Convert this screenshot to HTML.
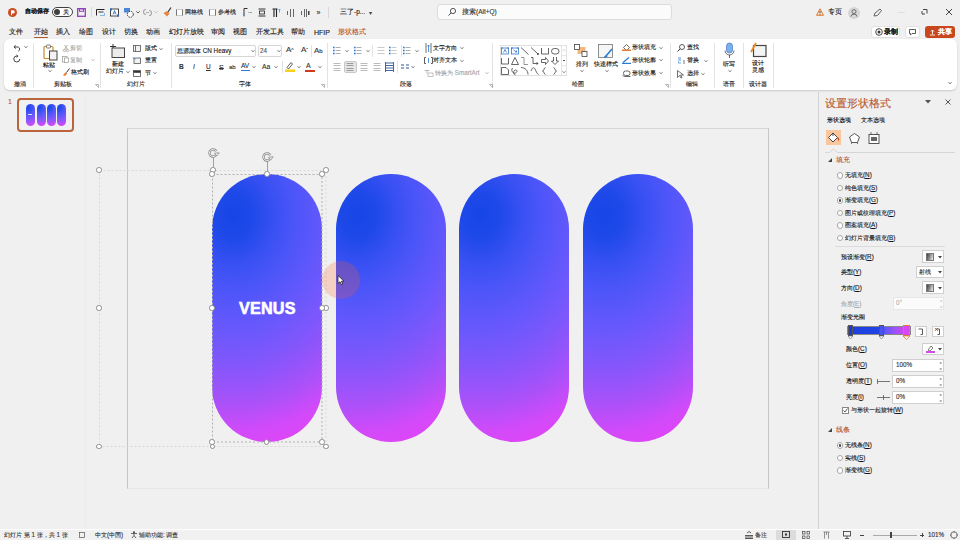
<!DOCTYPE html>
<html><head><meta charset="utf-8"><style>*{box-sizing:border-box}
html,body{margin:0;padding:0;width:960px;height:540px;overflow:hidden;background:#f0f0f0;font-family:"Liberation Sans",sans-serif;color:#262626}
.a{position:absolute}
.t{position:absolute;white-space:nowrap;-webkit-text-stroke:0.12px currentColor}
.cap{position:absolute;top:174px;width:110px;height:268px;border-radius:55px;
background:radial-gradient(ellipse 220px 264px at 21px 41px,#1646e5 0.00%,#1f49e9 9.09%,#3750f2 18.18%,#4a55f8 27.27%,#5b57fb 36.36%,#6c58fc 45.45%,#7e57fc 54.55%,#9454fa 63.64%,#af50f9 72.73%,#d14af9 81.82%,#e245f7 90.91%,#e843f6 100.00%)}
.hd{position:absolute;width:7px;height:7px;border-radius:50%;background:#fff;border:1px solid #8c8c8c}
svg{overflow:visible}
u{text-decoration-thickness:0.5px;text-underline-offset:0.6px}
</style></head><body>
<div class="a" style="left:0px;top:0px;width:960px;height:540px;background:#f0f0f0"></div>
<div class="a" style="left:4px;top:39px;width:953px;height:51px;background:#fff;border-radius:6px;box-shadow:0 1px 2px rgba(0,0,0,.16)"></div>
<div class="a" style="left:85px;top:92px;width:1px;height:437px;background:#ececec"></div>
<div class="a" style="left:127px;top:128px;width:642px;height:361px;border:1px solid #c6c6c6;border-top-color:#d6d6d6;border-bottom-color:#e6e6e6;background:#f0f0f0"></div>
<div class="t" style="left:8px;top:98.00px;font-size:7px;height:7px;line-height:7px;color:#b5562a;font-weight:normal;">1</div>
<div class="a" style="left:17px;top:98px;width:57px;height:34px;border:2px solid #b9643a;border-radius:4px;background:#f1f1f1"></div>
<div class="a" style="left:26px;top:104px;width:9px;height:22px;border-radius:4.5px;background:radial-gradient(ellipse 18px 21px at 2px 3.4px,#1b46e7 0%,#354ff1 18%,#5757fa 36%,#7a58fc 55%,#a752fa 73%,#de46f7 91%,#e843f6 100%)"></div>
<div class="a" style="left:36.5px;top:104px;width:9px;height:22px;border-radius:4.5px;background:radial-gradient(ellipse 18px 21px at 2px 3.4px,#1b46e7 0%,#354ff1 18%,#5757fa 36%,#7a58fc 55%,#a752fa 73%,#de46f7 91%,#e843f6 100%)"></div>
<div class="a" style="left:47px;top:104px;width:9px;height:22px;border-radius:4.5px;background:radial-gradient(ellipse 18px 21px at 2px 3.4px,#1b46e7 0%,#354ff1 18%,#5757fa 36%,#7a58fc 55%,#a752fa 73%,#de46f7 91%,#e843f6 100%)"></div>
<div class="a" style="left:57px;top:104px;width:9px;height:22px;border-radius:4.5px;background:radial-gradient(ellipse 18px 21px at 2px 3.4px,#1b46e7 0%,#354ff1 18%,#5757fa 36%,#7a58fc 55%,#a752fa 73%,#de46f7 91%,#e843f6 100%)"></div>
<div class="a" style="left:28px;top:114px;width:4px;height:1px;background:#ddd"></div>
<svg class="a" style="left:8px;top:8px;" width="9" height="9" viewBox="0 0 9 9"><circle cx="4.5" cy="4.5" r="4.5" fill="#c94d25"/><path d="M3 2.2h2.2a1.6 1.6 0 0 1 0 3.2H4v1.8H3z" fill="#fff"/></svg>
<div class="t" style="left:25px;top:9.05px;font-size:5.9px;height:5.9px;line-height:5.9px;color:#1a1a1a;font-weight:bold;">自动保存</div>
<div class="a" style="left:52px;top:7px;width:21px;height:10px;border:1px solid #404040;border-radius:5px;background:#fff"></div>
<div class="a" style="left:54px;top:9px;width:6px;height:6px;border-radius:50%;background:#404040"></div>
<div class="t" style="left:63px;top:9.00px;font-size:6px;height:6px;line-height:6px;color:#161616;font-weight:normal;">关</div>
<svg class="a" style="left:77px;top:8px;" width="9" height="9" viewBox="0 0 9 9"><rect x="0.7" y="0.7" width="7.6" height="7.6" fill="none" stroke="#8f3fb8" stroke-width="1.3"/><rect x="2.5" y="0.7" width="4" height="2.6" fill="none" stroke="#8f3fb8" stroke-width="1"/></svg>
<div class="a" style="left:91px;top:7px;width:1px;height:10px;background:#d8d8d8"></div>
<svg class="a" style="left:96px;top:9px;" width="9" height="8" viewBox="0 0 9 8"><path d="M.5 6.5V.5H8.5" fill="none" stroke="#222" stroke-width="1"/><path d="M2.5 3h5" stroke="#222" stroke-width=".9"/><path d="M4 6.5h4.5V4" fill="none" stroke="#7fb2e5" stroke-width="1"/></svg>
<svg class="a" style="left:110px;top:8px;" width="9" height="9" viewBox="0 0 9 9"><rect x=".5" y="1" width="8" height="7" fill="#fff" stroke="#333" stroke-width=".9"/><rect x="0" y=".5" width="2" height="2" fill="#2b6cc4"/><rect x="7" y="6.5" width="2" height="2" fill="#2b6cc4"/><path d="M3 6.5l1.5-4 1.5 4M3.6 5h1.8" fill="none" stroke="#2b6cc4" stroke-width=".8"/></svg>
<svg class="a" style="left:124px;top:8px;" width="10" height="10" viewBox="0 0 10 10"><rect x="0" y="0" width="6" height="4.5" fill="#4a86d8"/><circle cx="6.3" cy="6.3" r="3" fill="#fff" stroke="#333" stroke-width="1" stroke-dasharray="1.6 .8"/></svg>
<svg class="a" style="left:136px;top:11px;" width="4" height="3" viewBox="0 0 4 3"><path d="M.3.3L2 2 3.7.3" fill="none" stroke="#333" stroke-width=".8"/></svg>
<svg class="a" style="left:143px;top:8px;" width="9" height="9" viewBox="0 0 9 9"><path d="M3 1.5a2.5 2.5 0 1 0 0 5M6 2.5a2.5 2.5 0 1 1 0 5" fill="none" stroke="#aaa" stroke-width="1.2"/><path d="M3 4.5l3 0" stroke="#aaa" stroke-width="1"/></svg>
<svg class="a" style="left:154px;top:11px;" width="4" height="3" viewBox="0 0 4 3"><path d="M.3.3L2 2 3.7.3" fill="none" stroke="#bbb" stroke-width=".8"/></svg>
<svg class="a" style="left:163px;top:7px;" width="9" height="10" viewBox="0 0 9 10"><path d="M.5 6l3.5-2 2.5 2.5-2.5 3z" fill="#e9823e"/><path d="M5 5l3-4.5" stroke="#333" stroke-width="1.2"/></svg>
<div class="a" style="left:176px;top:9px;width:7px;height:7px;border:1px solid #777;border-top-color:#ccc;border-bottom-color:#ccc;background:#fff"></div>
<div class="t" style="left:185px;top:9.00px;font-size:6px;height:6px;line-height:6px;color:#161616;font-weight:normal;">网格线</div>
<div class="a" style="left:209px;top:9px;width:7px;height:7px;border:1px solid #777;border-top-color:#ccc;border-bottom-color:#ccc;background:#fff"></div>
<div class="t" style="left:218px;top:9.00px;font-size:6px;height:6px;line-height:6px;color:#161616;font-weight:normal;">参考线</div>
<svg class="a" style="left:243px;top:8px;" width="9" height="9" viewBox="0 0 9 9"><path d="M4.5.5H1V8" fill="none" stroke="#333" stroke-width="1"/><path d="M1 6v2.5" stroke="#4a90d9" stroke-width="1.2" stroke-dasharray="1 .6"/><path d="M5 4.5h2" stroke="#aaa" stroke-width=".8"/><circle cx="8" cy="4.5" r=".6" fill="#333"/></svg>
<svg class="a" style="left:258px;top:8px;" width="8" height="9" viewBox="0 0 8 9"><path d="M.5 1h7M.5 8h7" stroke="#333" stroke-width="1"/><rect x="1.5" y="3" width="5" height="3" fill="none" stroke="#333" stroke-width=".9"/><path d="M4 8.2v.8" stroke="#4a90d9" stroke-width=".8"/></svg>
<svg class="a" style="left:272px;top:8px;" width="9" height="9" viewBox="0 0 9 9"><path d="M.5 1h5M2 1v8M4.5 1v8" stroke="#222" stroke-width="1.1"/><path d="M6.5 1.5h2M7.5 1.5v3" stroke="#4a90d9" stroke-width=".8"/></svg>
<svg class="a" style="left:287px;top:9px;" width="7" height="8" viewBox="0 0 7 8"><path d="M.5 2v4M3.5 0v8M6.5 0v8" stroke="#444" stroke-width=".8"/></svg>
<svg class="a" style="left:301px;top:9px;" width="9" height="8" viewBox="0 0 9 8"><path d="M.5 2v4M3.5 0v8M5.5 0v8" stroke="#444" stroke-width=".8"/><rect x="7" y="2" width="1.5" height="4" fill="#444"/></svg>
<div class="t" style="left:316.5px;top:9.00px;font-size:7px;height:7px;line-height:7px;color:#333;font-weight:normal;">»</div>
<div class="a" style="left:328px;top:7px;width:1px;height:11px;background:#d8d8d8"></div>
<div class="t" style="left:340px;top:8.75px;font-size:6.5px;height:6.5px;line-height:6.5px;color:#161616;font-weight:normal;">三了-p...</div>
<div class="t" style="left:369px;top:9.50px;font-size:6px;height:6px;line-height:6px;color:#444;font-weight:normal;">▾</div>
<div class="a" style="left:437px;top:4px;width:235px;height:16px;background:#fbfbfb;border:1px solid #dcdcdc;border-radius:3px"></div>
<svg class="a" style="left:448px;top:8px;" width="8" height="8" viewBox="0 0 8 8"><circle cx="5" cy="3" r="2.6" fill="none" stroke="#444" stroke-width="0.9"/><path d="M3.1 4.9L0.5 7.5" stroke="#444" stroke-width="1"/></svg>
<div class="t" style="left:462px;top:8.75px;font-size:6.5px;height:6.5px;line-height:6.5px;color:#333;font-weight:normal;">搜索(Alt+Q)</div>
<svg class="a" style="left:816px;top:8px;" width="8" height="8" viewBox="0 0 8 8"><path d="M4 0.8L7.5 7.3H0.5z" fill="#fbe3cf" stroke="#e07b30" stroke-width="1"/><path d="M4 3v2.2M4 5.9v.8" stroke="#333" stroke-width=".9"/></svg>
<div class="t" style="left:828px;top:8.75px;font-size:6.5px;height:6.5px;line-height:6.5px;color:#161616;font-weight:normal;">专页</div>
<svg class="a" style="left:848px;top:7px;" width="12" height="12" viewBox="0 0 12 12"><circle cx="6" cy="6" r="6" fill="#d6d6d6"/><circle cx="6" cy="4.6" r="2" fill="none" stroke="#555" stroke-width=".8"/><path d="M2.8 9.6a3.3 3.3 0 0 1 6.4 0" fill="none" stroke="#555" stroke-width=".8"/></svg>
<svg class="a" style="left:873px;top:8px;" width="9" height="9" viewBox="0 0 9 9"><path d="M1 8l1-3 5-4 1.5 1.5-4 5z" fill="none" stroke="#555" stroke-width=".9"/></svg>
<div class="a" style="left:898px;top:12px;width:7px;height:1px;background:#e0e0e0"></div>
<svg class="a" style="left:921px;top:8px;" width="7" height="7" viewBox="0 0 7 7"><path d="M2 1.5h4v4M1 3v3h3" fill="none" stroke="#444" stroke-width="1"/></svg>
<svg class="a" style="left:945px;top:8px;" width="8" height="8" viewBox="0 0 8 8"><path d="M1 1l6 6M7 1l-6 6" stroke="#444" stroke-width="1"/></svg>
<div class="t" style="left:9px;top:28.60px;font-size:6.8px;height:6.8px;line-height:6.8px;color:#161616;font-weight:normal;">文件</div>
<div class="t" style="left:34px;top:28.60px;font-size:6.8px;height:6.8px;line-height:6.8px;color:#161616;font-weight:normal;">开始</div>
<div class="t" style="left:56px;top:28.60px;font-size:6.8px;height:6.8px;line-height:6.8px;color:#161616;font-weight:normal;">插入</div>
<div class="t" style="left:79px;top:28.60px;font-size:6.8px;height:6.8px;line-height:6.8px;color:#161616;font-weight:normal;">绘图</div>
<div class="t" style="left:102px;top:28.60px;font-size:6.8px;height:6.8px;line-height:6.8px;color:#161616;font-weight:normal;">设计</div>
<div class="t" style="left:124px;top:28.60px;font-size:6.8px;height:6.8px;line-height:6.8px;color:#161616;font-weight:normal;">切换</div>
<div class="t" style="left:146px;top:28.60px;font-size:6.8px;height:6.8px;line-height:6.8px;color:#161616;font-weight:normal;">动画</div>
<div class="t" style="left:169px;top:28.60px;font-size:6.8px;height:6.8px;line-height:6.8px;color:#161616;font-weight:normal;">幻灯片放映</div>
<div class="t" style="left:211px;top:28.60px;font-size:6.8px;height:6.8px;line-height:6.8px;color:#161616;font-weight:normal;">审阅</div>
<div class="t" style="left:233px;top:28.60px;font-size:6.8px;height:6.8px;line-height:6.8px;color:#161616;font-weight:normal;">视图</div>
<div class="t" style="left:256px;top:28.60px;font-size:6.8px;height:6.8px;line-height:6.8px;color:#161616;font-weight:normal;">开发工具</div>
<div class="t" style="left:291px;top:28.60px;font-size:6.8px;height:6.8px;line-height:6.8px;color:#161616;font-weight:normal;">帮助</div>
<div class="t" style="left:314px;top:28.50px;font-size:7px;height:7px;line-height:7px;color:#161616;font-weight:normal;">HFIP</div>
<div class="t" style="left:338px;top:28.60px;font-size:6.8px;height:6.8px;line-height:6.8px;color:#b8501f;font-weight:normal;">形状格式</div>
<div class="a" style="left:34px;top:36.5px;width:14px;height:1.6px;background:#a9582f;border-radius:1px"></div>
<div class="a" style="left:871px;top:26px;width:29px;height:12px;background:#fff;border:1px solid #e2e2e2;border-radius:3px"></div>
<svg class="a" style="left:875px;top:28px;" width="8" height="8" viewBox="0 0 8 8"><circle cx="4" cy="4" r="3.3" fill="none" stroke="#333" stroke-width=".9"/><circle cx="4" cy="4" r="1.5" fill="#333"/></svg>
<div class="t" style="left:884px;top:28.75px;font-size:6.5px;height:6.5px;line-height:6.5px;color:#1a1a1a;font-weight:bold;">录制</div>
<div class="a" style="left:905px;top:26px;width:15px;height:12px;background:#fff;border:1px solid #e2e2e2;border-radius:3px"></div>
<svg class="a" style="left:909px;top:29px;" width="7" height="6" viewBox="0 0 7 6"><path d="M0.5 0.5h6v4H3L1.5 6V4.5h-1z" fill="none" stroke="#333" stroke-width=".8"/></svg>
<div class="a" style="left:925px;top:26px;width:30px;height:12px;background:#c8471c;border-radius:3px"></div>
<svg class="a" style="left:929px;top:29px;" width="7" height="7" viewBox="0 0 7 7"><path d="M1 6h5M3.5 5V1M2 2.5l1.5-1.5 1.5 1.5" fill="none" stroke="#fff" stroke-width=".9"/></svg>
<div class="t" style="left:938px;top:28.75px;font-size:6.5px;height:6.5px;line-height:6.5px;color:#fff;font-weight:bold;">共享</div>
<div class="a" style="left:33px;top:43px;width:1px;height:45px;background:#e3e3e3"></div>
<div class="a" style="left:100px;top:43px;width:1px;height:45px;background:#e3e3e3"></div>
<div class="a" style="left:171px;top:43px;width:1px;height:45px;background:#e3e3e3"></div>
<div class="a" style="left:327px;top:43px;width:1px;height:45px;background:#e3e3e3"></div>
<div class="a" style="left:492px;top:43px;width:1px;height:45px;background:#e3e3e3"></div>
<div class="a" style="left:670px;top:43px;width:1px;height:45px;background:#e3e3e3"></div>
<div class="a" style="left:714px;top:43px;width:1px;height:45px;background:#e3e3e3"></div>
<div class="a" style="left:743px;top:43px;width:1px;height:45px;background:#e3e3e3"></div>
<div class="a" style="left:773px;top:43px;width:1px;height:45px;background:#e3e3e3"></div>
<svg class="a" style="left:13px;top:44px;" width="9" height="7" viewBox="0 0 9 7"><path d="M2.5 1.2L1 3l2 1.5" fill="none" stroke="#333" stroke-width=".9"/><path d="M1.3 3h4a2.3 2.3 0 0 1 0 4.2" fill="none" stroke="#333" stroke-width=".9"/></svg>
<svg class="a" style="left:24px;top:46px" width="4" height="2" viewBox="0 0 4 2"><path d="M.4.3L2 1.7 3.6.3" fill="none" stroke="#555" stroke-width=".75"/></svg>
<svg class="a" style="left:13px;top:55px;" width="8" height="8" viewBox="0 0 8 8"><path d="M6.8 4A3 3 0 1 1 4 1" fill="none" stroke="#333" stroke-width=".9"/><path d="M3.5 0l1.5 1-1.2 1.5" fill="none" stroke="#333" stroke-width=".9"/></svg>
<div class="t" style="left:14px;top:80.50px;font-size:6px;height:6px;line-height:6px;color:#222;font-weight:normal;">撤消</div>
<svg class="a" style="left:43px;top:44px;" width="15" height="17" viewBox="0 0 15 17"><rect x="1" y="2.5" width="9" height="12" rx="1" fill="#fff" stroke="#c98b2e" stroke-width="1.2"/><rect x="3.5" y="1" width="4" height="3" rx=".8" fill="#fff" stroke="#666" stroke-width=".9"/><rect x="6.5" y="7" width="7.5" height="9" fill="#f2f2f2" stroke="#444" stroke-width="1"/></svg>
<div class="t" style="left:43px;top:61.85px;font-size:6.3px;height:6.3px;line-height:6.3px;color:#161616;font-weight:normal;">粘贴</div>
<svg class="a" style="left:48px;top:70px" width="4" height="2" viewBox="0 0 4 2"><path d="M.4.3L2 1.7 3.6.3" fill="none" stroke="#555" stroke-width=".75"/></svg>
<svg class="a" style="left:63px;top:45px;" width="6" height="7" viewBox="0 0 6 7"><circle cx="1.5" cy="5.5" r="1.2" fill="none" stroke="#999" stroke-width=".7"/><circle cx="4.5" cy="5.5" r="1.2" fill="none" stroke="#999" stroke-width=".7"/><path d="M1.5 0l3 4.5M4.5 0l-3 4.5" stroke="#999" stroke-width=".7"/></svg>
<div class="t" style="left:70px;top:45.00px;font-size:6px;height:6px;line-height:6px;color:#a6a6a6;font-weight:normal;">剪切</div>
<svg class="a" style="left:62px;top:56px;" width="7" height="7" viewBox="0 0 7 7"><rect x=".5" y=".5" width="4.5" height="5.5" fill="none" stroke="#999" stroke-width=".7"/><rect x="2.5" y="2" width="4" height="4.5" fill="#fff" stroke="#999" stroke-width=".7"/></svg>
<div class="t" style="left:70px;top:56.50px;font-size:6px;height:6px;line-height:6px;color:#a6a6a6;font-weight:normal;">复制</div>
<svg class="a" style="left:91px;top:58.5px" width="4" height="2" viewBox="0 0 4 2"><path d="M.4.3L2 1.7 3.6.3" fill="none" stroke="#aaa" stroke-width=".75"/></svg>
<svg class="a" style="left:62px;top:68px;" width="8" height="8" viewBox="0 0 8 8"><path d="M1 7.5l2.2-3.2 2.3 1.3-2.5 2.5z" fill="#e9823e"/><path d="M4.5 4.5L7.5 .5" stroke="#333" stroke-width="1"/></svg>
<div class="t" style="left:71px;top:68.85px;font-size:6.3px;height:6.3px;line-height:6.3px;color:#161616;font-weight:normal;">格式刷</div>
<div class="t" style="left:54px;top:80.50px;font-size:6px;height:6px;line-height:6px;color:#222;font-weight:normal;">剪贴板</div>
<svg class="a" style="left:95px;top:84px;" width="4" height="4" viewBox="0 0 4 4"><path d="M.5 .5h3v3" fill="none" stroke="#888" stroke-width=".6"/><path d="M.5 .5l3 3" stroke="#888" stroke-width=".6"/></svg>
<svg class="a" style="left:109px;top:44px;" width="17" height="14" viewBox="0 0 17 14"><path d="M1 2.5h6M4 0v5" stroke="#333" stroke-width="1"/><rect x="3" y="4" width="12.5" height="9.5" fill="#ececec" stroke="#444" stroke-width="1"/></svg>
<div class="t" style="left:112px;top:61.35px;font-size:6.3px;height:6.3px;line-height:6.3px;color:#161616;font-weight:normal;">新建</div>
<div class="t" style="left:106px;top:68.35px;font-size:6.3px;height:6.3px;line-height:6.3px;color:#161616;font-weight:normal;">幻灯片</div>
<svg class="a" style="left:126px;top:70.5px" width="4" height="2" viewBox="0 0 4 2"><path d="M.4.3L2 1.7 3.6.3" fill="none" stroke="#555" stroke-width=".75"/></svg>
<svg class="a" style="left:133px;top:45px;" width="8" height="7" viewBox="0 0 8 7"><rect x=".5" y=".5" width="7" height="6" fill="#f2f2f2" stroke="#555" stroke-width=".8"/><path d="M2.5 .5v6" stroke="#555" stroke-width=".8"/></svg>
<div class="t" style="left:145px;top:45.35px;font-size:6.3px;height:6.3px;line-height:6.3px;color:#161616;font-weight:normal;">版式</div>
<svg class="a" style="left:159px;top:47.5px" width="4" height="2" viewBox="0 0 4 2"><path d="M.4.3L2 1.7 3.6.3" fill="none" stroke="#555" stroke-width=".75"/></svg>
<svg class="a" style="left:133px;top:57px;" width="8" height="7" viewBox="0 0 8 7"><rect x="1" y="1" width="6.5" height="5.5" fill="#f2f2f2" stroke="#555" stroke-width=".8"/><path d="M0 .5l2 2" stroke="#2b7cd3" stroke-width="1"/></svg>
<div class="t" style="left:145px;top:57.35px;font-size:6.3px;height:6.3px;line-height:6.3px;color:#161616;font-weight:normal;">重置</div>
<svg class="a" style="left:133px;top:70px;" width="8" height="7" viewBox="0 0 8 7"><rect x=".5" y=".5" width="7" height="6" fill="#fff" stroke="#555" stroke-width=".8"/><path d="M.5 1.8h7" stroke="#333" stroke-width="2"/></svg>
<div class="t" style="left:145px;top:69.85px;font-size:6.3px;height:6.3px;line-height:6.3px;color:#161616;font-weight:normal;">节</div>
<svg class="a" style="left:153px;top:72px" width="4" height="2" viewBox="0 0 4 2"><path d="M.4.3L2 1.7 3.6.3" fill="none" stroke="#555" stroke-width=".75"/></svg>
<div class="t" style="left:127px;top:80.50px;font-size:6px;height:6px;line-height:6px;color:#222;font-weight:normal;">幻灯片</div>
<div class="a" style="left:175px;top:45px;width:81px;height:12px;border:1px solid #d6d6d6;border-radius:2px;background:#fff"></div>
<div class="t" style="left:177px;top:47.85px;font-size:6.3px;height:6.3px;line-height:6.3px;color:#161616;font-weight:normal;">思源黑体 CN Heavy</div>
<svg class="a" style="left:251px;top:50px" width="4" height="2" viewBox="0 0 4 2"><path d="M.4.3L2 1.7 3.6.3" fill="none" stroke="#555" stroke-width=".75"/></svg>
<div class="a" style="left:258px;top:45px;width:24px;height:12px;border:1px solid #d6d6d6;border-radius:2px;background:#fff"></div>
<div class="t" style="left:260px;top:47.85px;font-size:6.3px;height:6.3px;line-height:6.3px;color:#555;font-weight:normal;">24</div>
<svg class="a" style="left:277px;top:50px" width="4" height="2" viewBox="0 0 4 2"><path d="M.4.3L2 1.7 3.6.3" fill="none" stroke="#555" stroke-width=".75"/></svg>
<div class="t" style="left:286px;top:45.50px;font-size:8px;height:8px;line-height:8px;color:#333;font-weight:normal;">A<span style="font-size:5px;vertical-align:top">^</span></div>
<div class="t" style="left:301px;top:45.50px;font-size:8px;height:8px;line-height:8px;color:#333;font-weight:normal;">A<span style="font-size:5px;vertical-align:top">ˇ</span></div>
<div class="a" style="left:311px;top:45px;width:1px;height:12px;background:#e3e3e3"></div>
<div class="t" style="left:314px;top:47.00px;font-size:8px;height:8px;line-height:8px;color:#333;font-weight:normal;">A<span style="font-size:6px">b</span></div>
<div class="t" style="left:179px;top:63.75px;font-size:6.5px;height:6.5px;line-height:6.5px;color:#333;font-weight:bold;">B</div>
<div class="t" style="left:193px;top:63.75px;font-size:6.5px;height:6.5px;line-height:6.5px;color:#333;font-weight:normal;"><i>I</i></div>
<div class="t" style="left:206px;top:63.75px;font-size:6.5px;height:6.5px;line-height:6.5px;color:#333;font-weight:normal;"><u>U</u></div>
<div class="t" style="left:219px;top:63.50px;font-size:7px;height:7px;line-height:7px;color:#333;font-weight:normal;"><s>S</s></div>
<div class="t" style="left:229px;top:64.00px;font-size:6px;height:6px;line-height:6px;color:#333;font-weight:normal;">ab</div>
<div class="t" style="left:241px;top:62.75px;font-size:6.5px;height:6.5px;line-height:6.5px;color:#333;font-weight:normal;">AV</div>
<div class="a" style="left:241px;top:70px;width:9px;height:1px;background:#2b7cd3"></div>
<svg class="a" style="left:252px;top:66px" width="4" height="2" viewBox="0 0 4 2"><path d="M.4.3L2 1.7 3.6.3" fill="none" stroke="#555" stroke-width=".75"/></svg>
<div class="t" style="left:262px;top:63.60px;font-size:6.8px;height:6.8px;line-height:6.8px;color:#333;font-weight:normal;">Aa</div>
<svg class="a" style="left:274px;top:66px" width="4" height="2" viewBox="0 0 4 2"><path d="M.4.3L2 1.7 3.6.3" fill="none" stroke="#555" stroke-width=".75"/></svg>
<div class="a" style="left:282px;top:61px;width:1px;height:12px;background:#e3e3e3"></div>
<svg class="a" style="left:285px;top:61px;" width="10" height="11" viewBox="0 0 10 11"><path d="M2 6.5l4-5 1.5 1.5-4 5z" fill="none" stroke="#333" stroke-width=".8"/><rect x="0" y="8.5" width="10" height="2.5" fill="#f3d11c"/></svg>
<svg class="a" style="left:297px;top:66px" width="4" height="2" viewBox="0 0 4 2"><path d="M.4.3L2 1.7 3.6.3" fill="none" stroke="#555" stroke-width=".75"/></svg>
<div class="t" style="left:306px;top:62.00px;font-size:7px;height:7px;line-height:7px;color:#333;font-weight:normal;">A</div>
<div class="a" style="left:305px;top:70px;width:10px;height:2px;background:#d0391b"></div>
<svg class="a" style="left:318px;top:66px" width="4" height="2" viewBox="0 0 4 2"><path d="M.4.3L2 1.7 3.6.3" fill="none" stroke="#555" stroke-width=".75"/></svg>
<div class="t" style="left:239px;top:80.50px;font-size:6px;height:6px;line-height:6px;color:#222;font-weight:normal;">字体</div>
<svg class="a" style="left:321px;top:84px;" width="4" height="4" viewBox="0 0 4 4"><path d="M.5 .5h3v3" fill="none" stroke="#888" stroke-width=".6"/><path d="M.5 .5l3 3" stroke="#888" stroke-width=".6"/></svg>
<svg class="a" style="left:333px;top:47px;" width="8" height="10" viewBox="0 0 8 10"><path d="M2.5 0.5h5" stroke="#999" stroke-width=".8"/><rect x="0" y="-0.30000000000000004" width="1.6" height="1.6" fill="#2b7cd3"/><path d="M2.5 3.5h5" stroke="#999" stroke-width=".8"/><rect x="0" y="2.7" width="1.6" height="1.6" fill="#2b7cd3"/><path d="M2.5 6.5h5" stroke="#999" stroke-width=".8"/><rect x="0" y="5.7" width="1.6" height="1.6" fill="#2b7cd3"/></svg>
<svg class="a" style="left:345px;top:50px" width="4" height="2" viewBox="0 0 4 2"><path d="M.4.3L2 1.7 3.6.3" fill="none" stroke="#555" stroke-width=".75"/></svg>
<svg class="a" style="left:354px;top:47px;" width="8" height="10" viewBox="0 0 8 10"><path d="M2.5 0.5h5" stroke="#999" stroke-width=".8"/><rect x="0" y="-0.30000000000000004" width="1.6" height="1.6" fill="#2b7cd3"/><path d="M2.5 3.5h5" stroke="#999" stroke-width=".8"/><rect x="0" y="2.7" width="1.6" height="1.6" fill="#2b7cd3"/><path d="M2.5 6.5h5" stroke="#999" stroke-width=".8"/><rect x="0" y="5.7" width="1.6" height="1.6" fill="#2b7cd3"/></svg>
<svg class="a" style="left:366px;top:50px" width="4" height="2" viewBox="0 0 4 2"><path d="M.4.3L2 1.7 3.6.3" fill="none" stroke="#555" stroke-width=".75"/></svg>
<div class="a" style="left:372px;top:45px;width:1px;height:12px;background:#e3e3e3"></div>
<svg class="a" style="left:377px;top:47px;" width="8" height="10" viewBox="0 0 8 10"><path d="M0.5 0.5h7" stroke="#bbb" stroke-width=".8"/><path d="M0.5 3.5h7" stroke="#bbb" stroke-width=".8"/><path d="M0.5 6.5h7" stroke="#bbb" stroke-width=".8"/></svg>
<svg class="a" style="left:389px;top:47px;" width="8" height="10" viewBox="0 0 8 10"><path d="M2.5 0.5h5" stroke="#bbb" stroke-width=".8"/><rect x="0" y="-0.30000000000000004" width="1.6" height="1.6" fill="#2b7cd3"/><path d="M2.5 3.5h5" stroke="#bbb" stroke-width=".8"/><rect x="0" y="2.7" width="1.6" height="1.6" fill="#2b7cd3"/><path d="M2.5 6.5h5" stroke="#bbb" stroke-width=".8"/><rect x="0" y="5.7" width="1.6" height="1.6" fill="#2b7cd3"/></svg>
<div class="a" style="left:401px;top:45px;width:1px;height:12px;background:#e3e3e3"></div>
<svg class="a" style="left:403px;top:47px;" width="8" height="10" viewBox="0 0 8 10"><path d="M2.5 0.5h5" stroke="#999" stroke-width=".8"/><rect x="0" y="-0.30000000000000004" width="1.6" height="1.6" fill="#2b7cd3"/><path d="M2.5 3.5h5" stroke="#999" stroke-width=".8"/><rect x="0" y="2.7" width="1.6" height="1.6" fill="#2b7cd3"/><path d="M2.5 6.5h5" stroke="#999" stroke-width=".8"/><rect x="0" y="5.7" width="1.6" height="1.6" fill="#2b7cd3"/></svg>
<svg class="a" style="left:415px;top:50px" width="4" height="2" viewBox="0 0 4 2"><path d="M.4.3L2 1.7 3.6.3" fill="none" stroke="#555" stroke-width=".75"/></svg>
<svg class="a" style="left:333px;top:63px;" width="8" height="10" viewBox="0 0 8 10"><path d="M0.5 0.5h7" stroke="#aaa" stroke-width=".8"/><path d="M0.5 2.5h7" stroke="#aaa" stroke-width=".8"/><path d="M0.5 5.5h7" stroke="#aaa" stroke-width=".8"/><path d="M0.5 7.5h7" stroke="#aaa" stroke-width=".8"/></svg>
<div class="a" style="left:344px;top:61px;width:13px;height:12px;background:#e6e6e6;border:1px solid #c8c8c8;border-radius:2px"></div>
<svg class="a" style="left:346px;top:63px;" width="8" height="10" viewBox="0 0 8 10"><path d="M0.5 0.5h7" stroke="#888" stroke-width=".8"/><path d="M0.5 2.5h7" stroke="#888" stroke-width=".8"/><path d="M0.5 5.5h7" stroke="#888" stroke-width=".8"/><path d="M0.5 7.5h7" stroke="#888" stroke-width=".8"/></svg>
<svg class="a" style="left:360px;top:63px;" width="8" height="10" viewBox="0 0 8 10"><path d="M0.5 0.5h7" stroke="#aaa" stroke-width=".8"/><path d="M0.5 2.5h7" stroke="#aaa" stroke-width=".8"/><path d="M0.5 5.5h7" stroke="#aaa" stroke-width=".8"/><path d="M0.5 7.5h7" stroke="#aaa" stroke-width=".8"/></svg>
<svg class="a" style="left:373px;top:63px;" width="8" height="10" viewBox="0 0 8 10"><path d="M0.5 0.5h7" stroke="#aaa" stroke-width=".8"/><path d="M0.5 2.5h7" stroke="#aaa" stroke-width=".8"/><path d="M0.5 5.5h7" stroke="#aaa" stroke-width=".8"/><path d="M0.5 7.5h7" stroke="#aaa" stroke-width=".8"/></svg>
<svg class="a" style="left:385px;top:62px;" width="9" height="10" viewBox="0 0 9 10"><path d="M1 1h7M1 3.5h7M1 6h7M1 8.5h7M.5 0v10M8.5 0v10" stroke="#2f5597" stroke-width=".9"/></svg>
<div class="a" style="left:397px;top:61px;width:1px;height:12px;background:#e3e3e3"></div>
<svg class="a" style="left:401px;top:64px;" width="8" height="5" viewBox="0 0 8 5"><path d="M0 1h3M5 1h3M0 4h3M5 4h3" stroke="#2f5597" stroke-width="1"/></svg>
<svg class="a" style="left:411px;top:66px" width="4" height="2" viewBox="0 0 4 2"><path d="M.4.3L2 1.7 3.6.3" fill="none" stroke="#555" stroke-width=".75"/></svg>
<svg class="a" style="left:425px;top:43px;" width="7" height="10" viewBox="0 0 7 10"><path d="M1 0v10M6 0v10" stroke="#333" stroke-width=".7"/><path d="M3.5 9V2M2 3.5l1.5-1.5 1.5 1.5" fill="none" stroke="#2b7cd3" stroke-width=".8"/></svg>
<div class="t" style="left:433px;top:44.85px;font-size:6.3px;height:6.3px;line-height:6.3px;color:#161616;font-weight:normal;">文字方向</div>
<svg class="a" style="left:460px;top:47px" width="4" height="2" viewBox="0 0 4 2"><path d="M.4.3L2 1.7 3.6.3" fill="none" stroke="#555" stroke-width=".75"/></svg>
<svg class="a" style="left:424px;top:57px;" width="9" height="7" viewBox="0 0 9 7"><path d="M2 .5H.5v6H2M7 .5h1.5v6H7" fill="none" stroke="#333" stroke-width=".8"/><path d="M4.5 1v5" stroke="#2b7cd3" stroke-width=".8"/></svg>
<div class="t" style="left:433px;top:57.35px;font-size:6.3px;height:6.3px;line-height:6.3px;color:#161616;font-weight:normal;">对齐文本</div>
<svg class="a" style="left:460px;top:59.5px" width="4" height="2" viewBox="0 0 4 2"><path d="M.4.3L2 1.7 3.6.3" fill="none" stroke="#555" stroke-width=".75"/></svg>
<svg class="a" style="left:424px;top:70px;" width="10" height="7" viewBox="0 0 10 7"><path d="M.5 .5h5M3 .5v3" stroke="#aaa" stroke-width=".8"/><rect x="4" y="3" width="5" height="3.5" fill="none" stroke="#aaa" stroke-width=".7"/></svg>
<div class="t" style="left:435px;top:69.85px;font-size:6.3px;height:6.3px;line-height:6.3px;color:#a6a6a6;font-weight:normal;">转换为 SmartArt</div>
<svg class="a" style="left:485px;top:72px" width="4" height="2" viewBox="0 0 4 2"><path d="M.4.3L2 1.7 3.6.3" fill="none" stroke="#aaa" stroke-width=".75"/></svg>
<div class="t" style="left:400px;top:80.50px;font-size:6px;height:6px;line-height:6px;color:#222;font-weight:normal;">段落</div>
<svg class="a" style="left:489px;top:84px;" width="4" height="4" viewBox="0 0 4 4"><path d="M.5 .5h3v3" fill="none" stroke="#888" stroke-width=".6"/><path d="M.5 .5l3 3" stroke="#888" stroke-width=".6"/></svg>
<div class="a" style="left:500px;top:45px;width:67px;height:31px;border:1px solid #e0e0e0;background:#fff"></div>
<div class="a" style="left:561px;top:46px;width:5px;height:29px;border-left:1px solid #e6e6e6;background:#fff"></div>
<div class="a" style="left:561px;top:55px;width:6px;height:1px;background:#e6e6e6"></div>
<div class="a" style="left:561px;top:65px;width:6px;height:1px;background:#e6e6e6"></div>
<svg class="a" style="left:562px;top:49px;" width="4" height="3" viewBox="0 0 4 3"><path d="M.4 2L2 .5 3.6 2" fill="none" stroke="#bbb" stroke-width=".7"/></svg>
<div class="a" style="left:563px;top:60px;width:2px;height:1px;background:#555"></div>
<svg class="a" style="left:561.5px;top:71px" width="4" height="2" viewBox="0 0 4 2"><path d="M.4.3L2 1.7 3.6.3" fill="none" stroke="#666" stroke-width=".75"/></svg>
<svg class="a" style="left:501px;top:47px;" width="8" height="8" viewBox="0 0 8 8"><rect x=".5" y="1" width="7" height="6" fill="none" stroke="#2b6cc4" stroke-width=".75"/><path d="M.5 1h1M6.5 1h1" stroke="#2b6cc4" stroke-width="1.6"/><path d="M2.5 5.5l1.5-3 1.5 3" fill="none" stroke="#2b6cc4" stroke-width=".75"/></svg>
<svg class="a" style="left:511px;top:47px;" width="8" height="8" viewBox="0 0 8 8"><rect x=".5" y="1" width="7" height="6" fill="none" stroke="#2b6cc4" stroke-width=".75"/><path d="M.5 1h1M6.5 1h1" stroke="#2b6cc4" stroke-width="1.6"/><path d="M2.5 3l3 2M5.5 3.5v1.5H4" fill="none" stroke="#2b6cc4" stroke-width=".75"/></svg>
<svg class="a" style="left:521px;top:47px;" width="8" height="8" viewBox="0 0 8 8"><path d="M0 .5l7.5 7" stroke="#333" stroke-width=".75"/></svg>
<svg class="a" style="left:531px;top:47px;" width="8" height="8" viewBox="0 0 8 8"><path d="M0 .5l7 6.5" stroke="#333" stroke-width=".75"/><circle cx="7" cy="7" r=".9" fill="#333"/></svg>
<svg class="a" style="left:541px;top:47px;" width="8" height="8" viewBox="0 0 8 8"><path d="M.5 1v6h7V1" fill="none" stroke="#333" stroke-width=".75"/></svg>
<svg class="a" style="left:551px;top:47px;" width="8" height="8" viewBox="0 0 8 8"><rect x=".5" y="1.5" width="7.5" height="5.5" rx="2.75" fill="none" stroke="#333" stroke-width=".75"/></svg>
<svg class="a" style="left:501px;top:57px;" width="8" height="8" viewBox="0 0 8 8"><path d="M.5 1v6h7V1" fill="none" stroke="#333" stroke-width=".75"/></svg>
<svg class="a" style="left:511px;top:57px;" width="8" height="8" viewBox="0 0 8 8"><path d="M4 .5L7.5 7.5H.5z" fill="none" stroke="#333" stroke-width=".75"/></svg>
<svg class="a" style="left:521px;top:57px;" width="8" height="8" viewBox="0 0 8 8"><path d="M0 .5h3v7h4" fill="none" stroke="#444" stroke-width=".7" stroke-opacity=".8"/></svg>
<svg class="a" style="left:531px;top:57px;" width="8" height="8" viewBox="0 0 8 8"><path d="M0 .5h2v6h5M5.5 5l1.5 1.5-1.5 1" fill="none" stroke="#333" stroke-width=".75"/></svg>
<svg class="a" style="left:541px;top:57px;" width="8" height="8" viewBox="0 0 8 8"><path d="M.5 2.5h4V.5L7.5 4l-3 3.5V5.5h-4z" fill="none" stroke="#333" stroke-width=".75"/></svg>
<svg class="a" style="left:551px;top:57px;" width="8" height="8" viewBox="0 0 8 8"><path d="M2.5 0v4H.5L4 7.5 7.5 4h-2V0" fill="none" stroke="#333" stroke-width=".75"/></svg>
<svg class="a" style="left:501px;top:67px;" width="8" height="8" viewBox="0 0 8 8"><path d="M.5 7.5V.5h4.5l2.5 2.5v4.5z" fill="none" stroke="#333" stroke-width=".75"/></svg>
<svg class="a" style="left:511px;top:67px;" width="8" height="8" viewBox="0 0 8 8"><path d="M1.5 1c-2 3 1 6 3 5s2-3 0-3-3 4 0 5" fill="none" stroke="#333" stroke-width=".75"/></svg>
<svg class="a" style="left:521px;top:67px;" width="8" height="8" viewBox="0 0 8 8"><path d="M0 .5c4 0 7 3 7 7" fill="none" stroke="#333" stroke-width=".75"/></svg>
<svg class="a" style="left:531px;top:67px;" width="8" height="8" viewBox="0 0 8 8"><path d="M0 4c1.5-4 3-4 4-2s2 5 3.5 5.5" fill="none" stroke="#333" stroke-width=".75"/></svg>
<svg class="a" style="left:541px;top:67px;" width="8" height="8" viewBox="0 0 8 8"><path d="M4.5 .5c-1.5 0-1.5 3.5-3 3.5 1.5 0 1.5 3.5 3 3.5" fill="none" stroke="#333" stroke-width=".75"/></svg>
<svg class="a" style="left:551px;top:67px;" width="8" height="8" viewBox="0 0 8 8"><path d="M2.5 .5c1.5 0 1.5 3.5 3 3.5-1.5 0-1.5 3.5-3 3.5" fill="none" stroke="#333" stroke-width=".75"/></svg>
<svg class="a" style="left:574px;top:44px;" width="14" height="13" viewBox="0 0 14 13"><rect x="3.5" y="3" width="8" height="7" fill="#f5b77e"/><rect x=".5" y=".5" width="5" height="5" fill="#fff" stroke="#444" stroke-width=".8"/><rect x="8" y="7.5" width="5" height="5" fill="#fff" stroke="#444" stroke-width=".8"/></svg>
<div class="t" style="left:576px;top:60.85px;font-size:6.3px;height:6.3px;line-height:6.3px;color:#161616;font-weight:normal;">排列</div>
<svg class="a" style="left:580px;top:69.5px" width="4" height="2" viewBox="0 0 4 2"><path d="M.4.3L2 1.7 3.6.3" fill="none" stroke="#555" stroke-width=".75"/></svg>
<svg class="a" style="left:598px;top:44px;" width="16" height="15" viewBox="0 0 16 15"><rect x=".5" y=".5" width="14" height="13" fill="#f6f6f6" stroke="#777" stroke-width=".8"/><path d="M14 5L8 12" stroke="#2b7cd3" stroke-width="1.6"/><path d="M6.5 13.5l2.5-2" stroke="#2b7cd3" stroke-width="2"/></svg>
<div class="t" style="left:594px;top:60.85px;font-size:6.3px;height:6.3px;line-height:6.3px;color:#161616;font-weight:normal;">快速样式</div>
<svg class="a" style="left:605px;top:69.5px" width="4" height="2" viewBox="0 0 4 2"><path d="M.4.3L2 1.7 3.6.3" fill="none" stroke="#555" stroke-width=".75"/></svg>
<svg class="a" style="left:622px;top:44px;" width="9" height="7" viewBox="0 0 9 7"><path d="M1.5 3.5L4.5.5 7.5 3.5 4.5 6.5z" fill="none" stroke="#444" stroke-width=".8"/><rect x="0" y="5.5" width="9" height="1.5" fill="#e07b3a"/></svg>
<div class="t" style="left:632px;top:44.35px;font-size:6.3px;height:6.3px;line-height:6.3px;color:#161616;font-weight:normal;">形状填充</div>
<svg class="a" style="left:659px;top:46.5px" width="4" height="2" viewBox="0 0 4 2"><path d="M.4.3L2 1.7 3.6.3" fill="none" stroke="#555" stroke-width=".75"/></svg>
<svg class="a" style="left:622px;top:57px;" width="9" height="7" viewBox="0 0 9 7"><path d="M1 5.5l6-5" stroke="#2b7cd3" stroke-width="1.3"/><rect x="0" y="5.8" width="9" height="1.2" fill="#2b7cd3"/></svg>
<div class="t" style="left:632px;top:56.85px;font-size:6.3px;height:6.3px;line-height:6.3px;color:#161616;font-weight:normal;">形状轮廓</div>
<svg class="a" style="left:659px;top:59px" width="4" height="2" viewBox="0 0 4 2"><path d="M.4.3L2 1.7 3.6.3" fill="none" stroke="#555" stroke-width=".75"/></svg>
<svg class="a" style="left:622px;top:70px;" width="9" height="7" viewBox="0 0 9 7"><rect x="1.5" y="1" width="6.5" height="4.5" rx="2" fill="none" stroke="#444" stroke-width=".8"/><path d="M.5 5.5l2 1h6" fill="none" stroke="#444" stroke-width=".8"/></svg>
<div class="t" style="left:632px;top:69.85px;font-size:6.3px;height:6.3px;line-height:6.3px;color:#161616;font-weight:normal;">形状效果</div>
<svg class="a" style="left:659px;top:72px" width="4" height="2" viewBox="0 0 4 2"><path d="M.4.3L2 1.7 3.6.3" fill="none" stroke="#555" stroke-width=".75"/></svg>
<div class="t" style="left:572px;top:81.00px;font-size:6px;height:6px;line-height:6px;color:#222;font-weight:normal;">绘图</div>
<svg class="a" style="left:665px;top:84px;" width="4" height="4" viewBox="0 0 4 4"><path d="M.5 .5h3v3" fill="none" stroke="#888" stroke-width=".6"/><path d="M.5 .5l3 3" stroke="#888" stroke-width=".6"/></svg>
<svg class="a" style="left:677px;top:44px;" width="8" height="8" viewBox="0 0 8 8"><circle cx="5" cy="3" r="2.5" fill="none" stroke="#333" stroke-width=".8"/><path d="M3.2 4.8L.5 7.5" stroke="#333" stroke-width="1"/></svg>
<div class="t" style="left:687px;top:44.35px;font-size:6.3px;height:6.3px;line-height:6.3px;color:#161616;font-weight:normal;">查找</div>
<svg class="a" style="left:677px;top:57px;" width="9" height="7" viewBox="0 0 9 7"><path d="M1 1h3M1 3h3" stroke="#2b7cd3" stroke-width=".8"/><path d="M6 6h2M6 4h2" stroke="#555" stroke-width=".8"/><path d="M1.5 4.5v1.5H4" fill="none" stroke="#2b7cd3" stroke-width=".7"/></svg>
<div class="t" style="left:687px;top:57.35px;font-size:6.3px;height:6.3px;line-height:6.3px;color:#161616;font-weight:normal;">替换</div>
<svg class="a" style="left:704px;top:59.5px" width="4" height="2" viewBox="0 0 4 2"><path d="M.4.3L2 1.7 3.6.3" fill="none" stroke="#555" stroke-width=".75"/></svg>
<svg class="a" style="left:677px;top:70px;" width="7" height="8" viewBox="0 0 7 8"><path d="M.5.5v7l2-2 1.5 2.5 1-.5-1.5-2.5h3z" fill="none" stroke="#333" stroke-width=".7"/></svg>
<div class="t" style="left:687px;top:70.35px;font-size:6.3px;height:6.3px;line-height:6.3px;color:#161616;font-weight:normal;">选择</div>
<svg class="a" style="left:701px;top:72.5px" width="4" height="2" viewBox="0 0 4 2"><path d="M.4.3L2 1.7 3.6.3" fill="none" stroke="#555" stroke-width=".75"/></svg>
<div class="t" style="left:686px;top:81.00px;font-size:6px;height:6px;line-height:6px;color:#222;font-weight:normal;">编辑</div>
<svg class="a" style="left:724px;top:43px;" width="11" height="16" viewBox="0 0 11 16"><rect x="2.5" y="0" width="6" height="10" rx="3" fill="#7fb0e8" stroke="#2b6cc2" stroke-width=".6"/><path d="M1 7.5a4.5 4.5 0 0 0 9 0M5.5 12v3" fill="none" stroke="#444" stroke-width=".8"/></svg>
<div class="t" style="left:723px;top:61.35px;font-size:6.3px;height:6.3px;line-height:6.3px;color:#161616;font-weight:normal;">听写</div>
<svg class="a" style="left:728px;top:70px" width="4" height="2" viewBox="0 0 4 2"><path d="M.4.3L2 1.7 3.6.3" fill="none" stroke="#555" stroke-width=".75"/></svg>
<div class="t" style="left:723px;top:81.00px;font-size:6px;height:6px;line-height:6px;color:#222;font-weight:normal;">语音</div>
<svg class="a" style="left:750px;top:43px;" width="17" height="14" viewBox="0 0 17 14"><rect x="3.5" y="2.5" width="12.5" height="11" fill="#f4f4f4" stroke="#444" stroke-width="1.2"/><path d="M6 0L1 9" stroke="#f08a28" stroke-width="1.8"/></svg>
<div class="t" style="left:752px;top:60.35px;font-size:6.3px;height:6.3px;line-height:6.3px;color:#161616;font-weight:normal;">设计</div>
<div class="t" style="left:752px;top:67.35px;font-size:6.3px;height:6.3px;line-height:6.3px;color:#161616;font-weight:normal;">灵感</div>
<div class="t" style="left:749px;top:81.00px;font-size:6px;height:6px;line-height:6px;color:#222;font-weight:normal;">设计器</div>
<svg class="a" style="left:948px;top:82px" width="4" height="2" viewBox="0 0 4 2"><path d="M.4.3L2 1.7 3.6.3" fill="none" stroke="#444" stroke-width=".75"/></svg>
<div class="cap" style="left:212px"></div>
<div class="cap" style="left:335.5px"></div>
<div class="cap" style="left:459px"></div>
<div class="cap" style="left:582.5px"></div>
<div class="t" style="left:239px;top:300.2px;font-size:17px;line-height:1;font-weight:bold;color:#fff;letter-spacing:0.2px;-webkit-text-stroke:0.6px #fff;transform:scaleX(0.95);transform-origin:0 0">VENUS</div>
<svg class="a" style="left:0px;top:0px;" width="960" height="540" viewBox="0 0 960 540"><rect x="99.5" y="170.5" width="226.5" height="276" fill="none" stroke="#d9d9d9" stroke-width="1" stroke-dasharray="2 2"/><rect x="212.5" y="174.5" width="109.5" height="267.5" fill="none" stroke="#b0b0b0" stroke-width="1" stroke-dasharray="2 2"/></svg>
<div class="hd" style="left:96.25px;top:167.25px;width:5.5px;height:5.5px"></div>
<div class="hd" style="left:210.25px;top:167.25px;width:5.5px;height:5.5px"></div>
<div class="hd" style="left:323.25px;top:167.25px;width:5.5px;height:5.5px"></div>
<div class="hd" style="left:96.25px;top:305.25px;width:5.5px;height:5.5px"></div>
<div class="hd" style="left:323.25px;top:305.25px;width:5.5px;height:5.5px"></div>
<div class="hd" style="left:96.25px;top:443.75px;width:5.5px;height:5.5px"></div>
<div class="hd" style="left:209.75px;top:443.75px;width:5.5px;height:5.5px"></div>
<div class="hd" style="left:323.25px;top:443.75px;width:5.5px;height:5.5px"></div>
<div class="hd" style="left:209.25px;top:171.25px;width:5.5px;height:5.5px"></div>
<div class="hd" style="left:264.25px;top:171.25px;width:5.5px;height:5.5px"></div>
<div class="hd" style="left:319.25px;top:171.25px;width:5.5px;height:5.5px"></div>
<div class="hd" style="left:209.25px;top:305.25px;width:5.5px;height:5.5px"></div>
<div class="hd" style="left:319.25px;top:305.25px;width:5.5px;height:5.5px"></div>
<div class="hd" style="left:209.25px;top:439.25px;width:5.5px;height:5.5px"></div>
<div class="hd" style="left:263.75px;top:439.25px;width:5.5px;height:5.5px"></div>
<div class="hd" style="left:319.25px;top:439.25px;width:5.5px;height:5.5px"></div>
<div class="a" style="left:212.5px;top:156px;width:1px;height:12px;background:#a0a0a0"></div>
<div class="a" style="left:266.5px;top:160px;width:1px;height:12px;background:#a0a0a0"></div>
<svg class="a" style="left:207px;top:147px;" width="13" height="12" viewBox="0 0 13 12"><path d="M9.2 4.2A3.6 3.6 0 1 0 9.4 7.4" fill="none" stroke="#8a8a8a" stroke-width="2.4"/><path d="M9.2 4.2A3.6 3.6 0 1 0 9.4 7.4" fill="none" stroke="#f4f4f4" stroke-width=".9"/><path d="M7.6 6.2L12.2 5.8 9.6 9z" fill="#f4f4f4" stroke="#8a8a8a" stroke-width=".8"/></svg>
<svg class="a" style="left:260.5px;top:151px;" width="13" height="12" viewBox="0 0 13 12"><path d="M9.2 4.2A3.6 3.6 0 1 0 9.4 7.4" fill="none" stroke="#8a8a8a" stroke-width="2.4"/><path d="M9.2 4.2A3.6 3.6 0 1 0 9.4 7.4" fill="none" stroke="#f4f4f4" stroke-width=".9"/><path d="M7.6 6.2L12.2 5.8 9.6 9z" fill="#f4f4f4" stroke="#8a8a8a" stroke-width=".8"/></svg>
<div class="a" style="left:322px;top:260.5px;width:38px;height:38px;border-radius:50%;background:rgba(255,90,40,.22)"></div>
<svg class="a" style="left:337px;top:275px;" width="8" height="11" viewBox="0 0 8 11"><path d="M1 0.5v8l2-1.8 1.5 3 1.3-.6-1.4-2.9H7z" fill="#fff" stroke="#222" stroke-width=".8"/></svg>
<div class="a" style="left:818px;top:92px;width:1px;height:437px;background:#d2d2d2"></div>
<div class="t" style="left:825px;top:98.25px;font-size:10.5px;height:10.5px;line-height:10.5px;color:#b85a2e;font-weight:normal;">设置形状格式</div>
<svg class="a" style="left:925px;top:100px;" width="6" height="4" viewBox="0 0 6 4"><path d="M0 0h6L3 3.5z" fill="#555"/></svg>
<svg class="a" style="left:945px;top:99px;" width="6" height="6" viewBox="0 0 6 6"><path d="M.5.5l5 5M5.5.5l-5 5" stroke="#444" stroke-width=".9"/></svg>
<div class="t" style="left:827px;top:117.35px;font-size:6.3px;height:6.3px;line-height:6.3px;color:#000;font-weight:normal;">形状选项</div>
<div class="t" style="left:861px;top:117.35px;font-size:6.3px;height:6.3px;line-height:6.3px;color:#161616;font-weight:normal;">文本选项</div>
<div class="a" style="left:826px;top:130px;width:15px;height:15px;background:#f9c69d"></div>
<svg class="a" style="left:828px;top:132px;" width="12" height="11" viewBox="0 0 12 11"><path d="M5 1L9.5 5.5 5 10 .5 5.5z" fill="#fff" stroke="#333" stroke-width=".9"/><path d="M5 1V4" stroke="#333" stroke-width=".9"/><path d="M9.5 5.5c1.2 1 1.5 2 1 3" fill="none" stroke="#c8471c" stroke-width="1.2"/></svg>
<svg class="a" style="left:849px;top:133px;" width="11" height="11" viewBox="0 0 11 11"><path d="M5.5.5L10.5 4 8.5 9.5h-6L.5 4z" fill="#fff" stroke="#444" stroke-width=".9"/><path d="M2.5 9.5v1.5M8.5 9.5v1.5" stroke="#444" stroke-width=".7"/></svg>
<svg class="a" style="left:868px;top:132px;" width="12" height="12" viewBox="0 0 12 12"><rect x="1" y="2.5" width="10" height="9" fill="#fff" stroke="#444" stroke-width=".9"/><rect x="3" y="5" width="6" height="4" fill="#666"/><path d="M3 0v2.5M9 0v2.5" stroke="#444" stroke-width=".7"/></svg>
<svg class="a" style="left:825px;top:148px;" width="130" height="5" viewBox="0 0 130 5"><path d="M0 4.5h4.5L8.5.8 12.5 4.5H130" fill="none" stroke="#d6d6d6" stroke-width="1"/></svg>
<svg class="a" style="left:828px;top:158px;" width="4" height="4" viewBox="0 0 4 4"><path d="M4 0v4H0z" fill="#444"/></svg>
<div class="t" style="left:836px;top:157.25px;font-size:6.5px;height:6.5px;line-height:6.5px;color:#b9562a;font-weight:normal;">填充</div>
<div class="a" style="left:836.5px;top:172.25px;width:6.5px;height:6.5px;border-radius:50%;background:#fff;border:1px solid #a8a8a8"></div>
<div class="t" style="left:845px;top:172.35px;font-size:6.3px;height:6.3px;line-height:6.3px;color:#161616;font-weight:normal;">无填充(<u>N</u>)</div>
<div class="a" style="left:836.5px;top:184.75px;width:6.5px;height:6.5px;border-radius:50%;background:#fff;border:1px solid #a8a8a8"></div>
<div class="t" style="left:845px;top:184.85px;font-size:6.3px;height:6.3px;line-height:6.3px;color:#161616;font-weight:normal;">纯色填充(<u>S</u>)</div>
<div class="a" style="left:836.5px;top:197.25px;width:6.5px;height:6.5px;border-radius:50%;background:#fff;border:1px solid #a8a8a8"></div>
<div class="a" style="left:838.6px;top:199.35px;width:2.3px;height:2.3px;border-radius:50%;background:#444"></div>
<div class="t" style="left:845px;top:197.35px;font-size:6.3px;height:6.3px;line-height:6.3px;color:#161616;font-weight:normal;">渐变填充(<u>G</u>)</div>
<div class="a" style="left:836.5px;top:209.75px;width:6.5px;height:6.5px;border-radius:50%;background:#fff;border:1px solid #a8a8a8"></div>
<div class="t" style="left:845px;top:209.85px;font-size:6.3px;height:6.3px;line-height:6.3px;color:#161616;font-weight:normal;">图片或纹理填充(<u>P</u>)</div>
<div class="a" style="left:836.5px;top:222.25px;width:6.5px;height:6.5px;border-radius:50%;background:#fff;border:1px solid #a8a8a8"></div>
<div class="t" style="left:845px;top:222.35px;font-size:6.3px;height:6.3px;line-height:6.3px;color:#161616;font-weight:normal;">图案填充(<u>A</u>)</div>
<div class="a" style="left:836.5px;top:234.75px;width:6.5px;height:6.5px;border-radius:50%;background:#fff;border:1px solid #a8a8a8"></div>
<div class="t" style="left:845px;top:234.85px;font-size:6.3px;height:6.3px;line-height:6.3px;color:#161616;font-weight:normal;">幻灯片背景填充(<u>B</u>)</div>
<div class="a" style="left:835px;top:246px;width:110px;height:1px;background:#dcdcdc"></div>
<div class="t" style="left:841px;top:253.85px;font-size:6.3px;height:6.3px;line-height:6.3px;color:#161616;font-weight:normal;">预设渐变(<u>R</u>)</div>
<div class="a" style="left:922px;top:250px;width:22px;height:13px;background:#fff;border:1px solid #cfcfcf"></div>
<div class="a" style="left:926px;top:252.5px;width:8px;height:8px;border:1px solid #777;background:linear-gradient(110deg,#3a3a3a,#f0f0f0)"></div>
<svg class="a" style="left:938px;top:255.5px;" width="4" height="3" viewBox="0 0 4 3"><path d="M0 0h4L2 2.5z" fill="#444"/></svg>
<div class="t" style="left:841px;top:269.35px;font-size:6.3px;height:6.3px;line-height:6.3px;color:#161616;font-weight:normal;">类型(<u>Y</u>)</div>
<div class="a" style="left:916px;top:266px;width:28px;height:12px;background:#fff;border:1px solid #cfcfcf"></div>
<div class="t" style="left:919px;top:269px;font-size:6.3px;line-height:6.3px;color:#333">射线</div>
<svg class="a" style="left:938px;top:271.0px;" width="4" height="3" viewBox="0 0 4 3"><path d="M0 0h4L2 2.5z" fill="#444"/></svg>
<div class="t" style="left:841px;top:284.85px;font-size:6.3px;height:6.3px;line-height:6.3px;color:#161616;font-weight:normal;">方向(<u>D</u>)</div>
<div class="a" style="left:922px;top:281px;width:22px;height:13px;background:#fff;border:1px solid #cfcfcf"></div>
<div class="a" style="left:926px;top:283.5px;width:8px;height:8px;border:1px solid #777;background:linear-gradient(110deg,#3a3a3a,#f0f0f0)"></div>
<svg class="a" style="left:938px;top:286.5px;" width="4" height="3" viewBox="0 0 4 3"><path d="M0 0h4L2 2.5z" fill="#444"/></svg>
<div class="t" style="left:841px;top:300.85px;font-size:6.3px;height:6.3px;line-height:6.3px;color:#a8a8a8;font-weight:normal;">角度(<u>E</u>)</div>
<div class="a" style="left:893px;top:297px;width:51px;height:13px;background:#fbfbfb;border:1px solid #e6e6e6"></div>
<div class="t" style="left:896px;top:300.35px;font-size:6.3px;height:6.3px;line-height:6.3px;color:#b0b0b0;font-weight:normal;">0°</div>
<div class="t" style="left:940px;top:298.50px;font-size:4px;height:4px;line-height:4px;color:#bbb;font-weight:normal;">˄</div>
<div class="t" style="left:940px;top:304.50px;font-size:4px;height:4px;line-height:4px;color:#bbb;font-weight:normal;">˅</div>
<div class="t" style="left:841px;top:313.85px;font-size:6.3px;height:6.3px;line-height:6.3px;color:#161616;font-weight:normal;">渐变光圈</div>
<div class="a" style="left:847px;top:326px;width:64px;height:9px;background:linear-gradient(90deg,#1d3fdc 0%,#2044e6 55%,#5a56fa 58%,#9a55fc 75%,#e040f0 95%);border:1px solid #888"></div>
<div class="a" style="left:848px;top:325px;width:5px;height:11px;background:#1a3ad8;border:1px solid #555"></div>
<svg class="a" style="left:848px;top:336px;" width="5" height="3" viewBox="0 0 5 3"><path d="M0 0h5L2.5 3z" fill="#fff" stroke="#666" stroke-width=".6"/></svg>
<div class="a" style="left:879px;top:325px;width:5px;height:11px;background:#4a55f0;border:1px solid #555"></div>
<svg class="a" style="left:879px;top:336px;" width="5" height="3" viewBox="0 0 5 3"><path d="M0 0h5L2.5 3z" fill="#fff" stroke="#666" stroke-width=".6"/></svg>
<div class="a" style="left:903px;top:325px;width:7px;height:11px;background:#d848f0;border:1px solid #e07b3a"></div>
<svg class="a" style="left:903px;top:336px;" width="7" height="4" viewBox="0 0 7 4"><path d="M0 0h7L3.5 3.5z" fill="#fff" stroke="#e07b3a" stroke-width=".8"/></svg>
<div class="a" style="left:915px;top:326px;width:12px;height:11px;background:#fff;border:1px solid #cfcfcf"></div>
<svg class="a" style="left:918px;top:328px;" width="6" height="7" viewBox="0 0 6 7"><path d="M.5 1h4v5.5h-2" fill="none" stroke="#333" stroke-width=".8"/></svg>
<div class="a" style="left:932px;top:326px;width:12px;height:11px;background:#fff;border:1px solid #cfcfcf"></div>
<svg class="a" style="left:935px;top:328px;" width="6" height="7" viewBox="0 0 6 7"><path d="M.5 1h4v5.5h-2" fill="none" stroke="#333" stroke-width=".8"/><path d="M0 0l3 3M3 0L0 3" stroke="#d0391b" stroke-width=".7"/></svg>
<div class="t" style="left:846px;top:345.85px;font-size:6.3px;height:6.3px;line-height:6.3px;color:#161616;font-weight:normal;">颜色(<u>C</u>)</div>
<div class="a" style="left:922px;top:343px;width:22px;height:12px;background:#fff;border:1px solid #cfcfcf"></div>

<svg class="a" style="left:938px;top:348.0px;" width="4" height="3" viewBox="0 0 4 3"><path d="M0 0h4L2 2.5z" fill="#444"/></svg>
<svg class="a" style="left:926px;top:345px;" width="9" height="8" viewBox="0 0 9 8"><path d="M2 5l3-4 2 2-3 3z" fill="none" stroke="#444" stroke-width=".7"/><rect x="0" y="6" width="9" height="2" fill="#d848f0"/></svg>
<div class="t" style="left:846px;top:361.85px;font-size:6.3px;height:6.3px;line-height:6.3px;color:#161616;font-weight:normal;">位置(<u>O</u>)</div>
<div class="a" style="left:892px;top:359px;width:52px;height:13px;background:#fff;border:1px solid #cfcfcf"></div>
<div class="t" style="left:896px;top:362.35px;font-size:6.3px;height:6.3px;line-height:6.3px;color:#333;font-weight:normal;">100%</div>
<div class="t" style="left:939.5px;top:360.50px;font-size:4px;height:4px;line-height:4px;color:#666;font-weight:normal;">˄</div>
<div class="t" style="left:939.5px;top:366.50px;font-size:4px;height:4px;line-height:4px;color:#666;font-weight:normal;">˅</div>
<div class="t" style="left:846px;top:378.35px;font-size:6.3px;height:6.3px;line-height:6.3px;color:#161616;font-weight:normal;">透明度(<u>T</u>)</div>
<div class="a" style="left:892px;top:375px;width:52px;height:13px;background:#fff;border:1px solid #cfcfcf"></div>
<div class="t" style="left:896px;top:378.35px;font-size:6.3px;height:6.3px;line-height:6.3px;color:#333;font-weight:normal;">0%</div>
<div class="t" style="left:939.5px;top:376.50px;font-size:4px;height:4px;line-height:4px;color:#666;font-weight:normal;">˄</div>
<div class="t" style="left:939.5px;top:382.50px;font-size:4px;height:4px;line-height:4px;color:#666;font-weight:normal;">˅</div>
<svg class="a" style="left:877px;top:379px;" width="13" height="5" viewBox="0 0 13 5"><path d="M.5 0v5M.5 2.5H13" stroke="#555" stroke-width=".8"/></svg>
<div class="t" style="left:846px;top:394.35px;font-size:6.3px;height:6.3px;line-height:6.3px;color:#161616;font-weight:normal;">亮度(<u>I</u>)</div>
<div class="a" style="left:892px;top:391px;width:52px;height:13px;background:#fff;border:1px solid #cfcfcf"></div>
<div class="t" style="left:896px;top:394.35px;font-size:6.3px;height:6.3px;line-height:6.3px;color:#333;font-weight:normal;">0%</div>
<div class="t" style="left:939.5px;top:392.50px;font-size:4px;height:4px;line-height:4px;color:#666;font-weight:normal;">˄</div>
<div class="t" style="left:939.5px;top:398.50px;font-size:4px;height:4px;line-height:4px;color:#666;font-weight:normal;">˅</div>
<svg class="a" style="left:877px;top:395px;" width="13" height="5" viewBox="0 0 13 5"><path d="M6.5 0v5M0 2.5H13" stroke="#555" stroke-width=".8"/></svg>
<div class="a" style="left:842px;top:407px;width:7px;height:7px;background:#fff;border:1px solid #888"></div>
<svg class="a" style="left:843px;top:408px;" width="5" height="5" viewBox="0 0 5 5"><path d="M.5 2.5l1.5 1.5 2.5-3.5" fill="none" stroke="#333" stroke-width=".8"/></svg>
<div class="t" style="left:851px;top:407.35px;font-size:6.3px;height:6.3px;line-height:6.3px;color:#161616;font-weight:normal;">与形状一起旋转(<u>W</u>)</div>
<svg class="a" style="left:828px;top:428px;" width="4" height="4" viewBox="0 0 4 4"><path d="M4 0v4H0z" fill="#444"/></svg>
<div class="t" style="left:836px;top:427.25px;font-size:6.5px;height:6.5px;line-height:6.5px;color:#b9562a;font-weight:normal;">线条</div>
<div class="a" style="left:836.5px;top:442.25px;width:6.5px;height:6.5px;border-radius:50%;background:#fff;border:1px solid #a8a8a8"></div>
<div class="a" style="left:838.6px;top:444.35px;width:2.3px;height:2.3px;border-radius:50%;background:#444"></div>
<div class="t" style="left:845px;top:442.35px;font-size:6.3px;height:6.3px;line-height:6.3px;color:#161616;font-weight:normal;">无线条(<u>N</u>)</div>
<div class="a" style="left:836.5px;top:454.75px;width:6.5px;height:6.5px;border-radius:50%;background:#fff;border:1px solid #a8a8a8"></div>
<div class="t" style="left:845px;top:454.85px;font-size:6.3px;height:6.3px;line-height:6.3px;color:#161616;font-weight:normal;">实线(<u>S</u>)</div>
<div class="a" style="left:836.5px;top:467.25px;width:6.5px;height:6.5px;border-radius:50%;background:#fff;border:1px solid #a8a8a8"></div>
<div class="t" style="left:845px;top:467.35px;font-size:6.3px;height:6.3px;line-height:6.3px;color:#161616;font-weight:normal;">渐变线(<u>G</u>)</div>
<div class="a" style="left:0px;top:529px;width:960px;height:11px;background:#f1f1f1;border-top:1px solid #fdfdfd"></div>
<div class="t" style="left:4px;top:531.85px;font-size:6.3px;height:6.3px;line-height:6.3px;color:#333;font-weight:normal;">幻灯片 第 1 张，共 1 张</div>
<svg class="a" style="left:79px;top:532px;" width="6" height="6" viewBox="0 0 6 6"><rect x=".5" y=".5" width="5" height="5" fill="none" stroke="#555" stroke-width=".7"/></svg>
<div class="t" style="left:95px;top:531.85px;font-size:6.3px;height:6.3px;line-height:6.3px;color:#333;font-weight:normal;">中文(中国)</div>
<svg class="a" style="left:131px;top:531px;" width="6" height="7" viewBox="0 0 6 7"><circle cx="3" cy="1.2" r="1" fill="#444"/><path d="M0 2.5h6M3 2.5v2l-2 2.5M3 4.5l2 2.5" fill="none" stroke="#444" stroke-width=".8"/></svg>
<div class="t" style="left:139px;top:531.85px;font-size:6.3px;height:6.3px;line-height:6.3px;color:#333;font-weight:normal;">辅助功能: 调查</div>
<svg class="a" style="left:745px;top:531px;" width="8" height="8" viewBox="0 0 8 8"><path d="M2 2l2-1.5L6 2M0 4.5h8M0 6h8M0 7.5h8" fill="none" stroke="#333" stroke-width=".8"/></svg>
<div class="t" style="left:755px;top:531.85px;font-size:6.3px;height:6.3px;line-height:6.3px;color:#333;font-weight:normal;">备注</div>
<div class="a" style="left:776px;top:530px;width:20px;height:10px;background:#dcdcdc"></div>
<svg class="a" style="left:782px;top:531px;" width="8" height="7" viewBox="0 0 8 7"><rect x=".5" y=".5" width="7" height="6" fill="none" stroke="#333" stroke-width=".9"/><rect x="3" y="2.5" width="2" height="2" fill="#333"/></svg>
<svg class="a" style="left:802px;top:531px;" width="8" height="8" viewBox="0 0 8 8"><rect x=".5" y=".5" width="2.5" height="2.5" fill="none" stroke="#444" stroke-width=".7"/><rect x="5" y=".5" width="2.5" height="2.5" fill="none" stroke="#444" stroke-width=".7"/><rect x=".5" y="5" width="2.5" height="2.5" fill="none" stroke="#444" stroke-width=".7"/><rect x="5" y="5" width="2.5" height="2.5" fill="none" stroke="#444" stroke-width=".7"/></svg>
<svg class="a" style="left:823px;top:531px;" width="7" height="8" viewBox="0 0 7 8"><path d="M.5 1h6M1.5 1v6.5M5.5 1v6.5M3.5 1v3" fill="none" stroke="#666" stroke-width=".7"/></svg>
<svg class="a" style="left:843px;top:531px;" width="8" height="8" viewBox="0 0 8 8"><rect x=".5" y=".5" width="7" height="4.5" fill="none" stroke="#333" stroke-width=".8"/><path d="M4 5v2M2 7.5h4" stroke="#333" stroke-width=".8"/></svg>
<div class="a" style="left:860px;top:534.5px;width:4px;height:1px;background:#444"></div>
<div class="a" style="left:873px;top:535px;width:44px;height:1px;background:#aaa"></div>
<div class="a" style="left:890px;top:532px;width:2px;height:6px;background:#444"></div>
<div class="a" style="left:920px;top:534.5px;width:4px;height:1px;background:#444"></div>
<div class="a" style="left:921.5px;top:533px;width:1px;height:4px;background:#444"></div>
<div class="t" style="left:928px;top:531.85px;font-size:6.3px;height:6.3px;line-height:6.3px;color:#333;font-weight:normal;">101%</div>
<svg class="a" style="left:950px;top:531px;" width="8" height="8" viewBox="0 0 8 8"><circle cx="4" cy="4" r="3.2" fill="none" stroke="#555" stroke-width=".8"/><path d="M4 0v1.5M4 6.5V8M0 4h1.5M6.5 4H8" stroke="#555" stroke-width=".8"/></svg>
</body></html>
